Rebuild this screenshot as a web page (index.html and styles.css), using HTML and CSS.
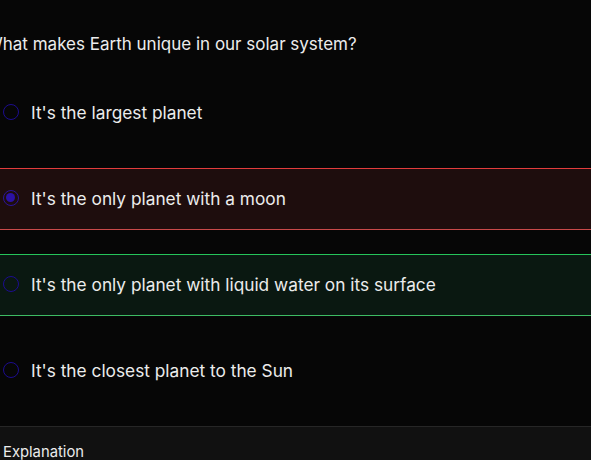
FILE: index.html
```html
<!DOCTYPE html>
<html>
<head>
<meta charset="utf-8">
<link rel="stylesheet" href="styles.css">
</head>
<body>
<div class="quiz">
  <h2 class="question">What makes Earth unique in our solar system?</h2>
  <div class="options">
    <label class="option">
      <span class="radio"></span>
      <span class="label">It's the largest planet</span>
    </label>
    <label class="option wrong">
      <span class="radio checked"></span>
      <span class="label">It's the only planet with a moon</span>
    </label>
    <label class="option right">
      <span class="radio"></span>
      <span class="label">It's the only planet with liquid water on its surface</span>
    </label>
    <label class="option">
      <span class="radio"></span>
      <span class="label">It's the closest planet to the Sun</span>
    </label>
  </div>
  <div class="explanation">
    <div class="exp-title">Explanation</div>
  </div>
</div>
</body>
</html>
```

FILE: styles.css
```css
html, body {
  margin: 0;
  padding: 0;
  background: #060606;
  overflow: hidden;
}
body {
  font-family: Inter, "Noto Sans", sans-serif;
  color: #ececec;
  width: 591px;
  height: 460px;
}
.quiz {
  display: flex;
  flex-direction: column;
}
.question {
  margin: 32px 0 0 -14px;
  font-size: 17px;
  font-weight: 400;
  line-height: 24px;
  height: 24px;
  white-space: nowrap;
}
.options {
  display: flex;
  flex-direction: column;
  gap: 24px;
  margin-top: 26px;
}
.option {
  box-sizing: border-box;
  display: flex;
  align-items: center;
  gap: 12px;
  height: 62px;
  padding: 0 0 2px 3px;
  border-top: 1px solid transparent;
  border-bottom: 1px solid transparent;
  font-size: 17.3px;
}
.option.wrong {
  background: #1e0d0d;
  border-color: #e23c3c;
  border-bottom-color: #c94a4a;
}
.option.right {
  background: #0a1811;
  border-color: #25c45a;
  border-bottom-color: #3dbb63;
}
.radio {
  box-sizing: border-box;
  width: 16px;
  height: 16px;
  border-radius: 50%;
  border: 1.5px solid #1c0c8e;
  flex: none;
  position: relative;
}
.radio.checked {
  border-color: #2b149a;
}
.radio.checked::after {
  content: "";
  position: absolute;
  left: 2px;
  top: 2px;
  width: 9px;
  height: 9px;
  border-radius: 50%;
  background: #2c12a4;
}
.label {
  white-space: nowrap;
}
.explanation {
  margin-top: 24px;
  border-top: 1px solid #262626;
  background: #111111;
  height: 60px;
  padding-left: 3px;
}
.exp-title {
  font-size: 14.8px;
  line-height: 24px;
  margin-top: 13px;
}
```
